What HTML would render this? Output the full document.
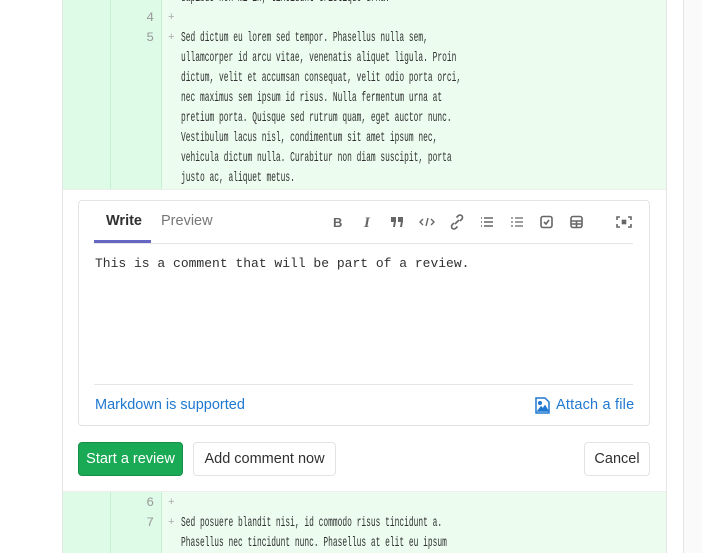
<!DOCTYPE html>
<html><head><meta charset="utf-8"><style>
*{margin:0;padding:0;box-sizing:border-box}
body{width:702px;height:553px;overflow:hidden;background:#fff;font-family:"Liberation Sans",sans-serif;position:relative}
.rbg{position:absolute;left:683px;top:0;width:19px;height:553px;background:#fafafa;border-left:1px solid #e5e5e5}
.frame{position:absolute;left:62px;top:0;width:605px;height:553px;border-left:1px solid #e5e5e5;border-right:1px solid #e5e5e5}
.diff{position:absolute;left:62px;width:605px;background:#ecfdf0;border-left:1px solid #e5e5e5;border-right:1px solid #e5e5e5}
.c1{position:absolute;left:0;top:0;bottom:0;width:48px;background:#ddfbe6;border-right:1px solid #c7f0d2}
.c2{position:absolute;left:48px;top:0;bottom:0;width:51px;background:#ddfbe6;border-right:1px solid #c7f0d2}
.ln{position:absolute;left:48px;width:43px;text-align:right;font:13px "Liberation Mono",monospace;color:#999;line-height:20px}
.pl{position:absolute;left:105px;font:11px "Liberation Mono",monospace;color:#aaa;line-height:20px}
.code{position:absolute;left:118px;font:14px "Liberation Mono",monospace;color:#303030;line-height:20px;transform:scaleX(0.565);transform-origin:0 0;white-space:pre}
.box{position:absolute;left:78px;top:200px;width:572px;height:226px;border:1px solid #e3e3e3;border-radius:4px;background:#fff}
.tab{position:absolute;top:213px;font-size:14.5px}
.bar{position:absolute;left:94px;top:240px;width:57px;height:3px;background:#6666c4}
.sep{position:absolute;left:94px;width:539px;height:1px;background:#e5e5e5}
.ta{position:absolute;left:95px;top:256px;font:13px "Liberation Mono",monospace;color:#303030}
.lnk{position:absolute;top:397px;font-size:14.5px;color:#1f78d1}
.btn{position:absolute;top:442px;height:34px;border:1px solid #e3e3e3;border-radius:4px;background:#fff;font-size:14.5px;color:#303030;line-height:32px;text-align:center}
.ic{position:absolute;top:214px}
</style></head><body>
<div class="rbg"></div>
<div class="frame"></div>
<div class="diff" style="top:0;height:190px">
 <div class="c1"></div><div class="c2"></div>
 <div class="code" style="top:-12px">dapibus non mi in, tincidunt tristique urna.</div>
 <div class="ln" style="top:8px">4</div><div class="pl" style="top:8px">+</div>
 <div class="ln" style="top:28px">5</div><div class="pl" style="top:28px">+</div>
 <div class="code" style="top:28px">Sed dictum eu lorem sed tempor. Phasellus nulla sem,
ullamcorper id arcu vitae, venenatis aliquet ligula. Proin
dictum, velit et accumsan consequat, velit odio porta orci,
nec maximus sem ipsum id risus. Nulla fermentum urna at
pretium porta. Quisque sed rutrum quam, eget auctor nunc.
Vestibulum lacus nisl, condimentum sit amet ipsum nec,
vehicula dictum nulla. Curabitur non diam suscipit, porta
justo ac, aliquet metus.</div>
</div>
<div style="position:absolute;left:63px;top:189px;width:603px;height:1px;background:#eee"></div>
<div class="box"></div>
<div class="tab" style="left:106px;color:#303030;font-weight:bold">Write</div>
<div class="tab" style="left:161px;color:#777">Preview</div>
<div class="bar"></div>
<div class="sep" style="top:243px"></div>
<svg class="ic" style="left:326px" width="310" height="16" viewBox="0 0 310 16" fill="none" stroke="#666" stroke-width="1.6">
 <text x="7" y="13" font-family="Liberation Sans" font-weight="bold" font-size="13" fill="#666" stroke="none">B</text>
 <text x="38" y="13" font-family="Liberation Serif" font-style="italic" font-weight="bold" font-size="15" fill="#666" stroke="none">I</text>
 <g fill="#666" stroke="none"><rect x="65" y="3" width="5" height="5"/><path d="M68 7h2l-1 6h-2z"/><rect x="72" y="3" width="5" height="5"/><path d="M75 7h2l-1 6h-2z"/></g>
 <path d="M97 5l-3 3 3 3M105 5l3 3-3 3M102 4l-2 8" stroke-width="1.4"/>
 <path d="M128 9l-2 2a2.5 2.5 0 0 0 3.5 3.5l2-2M134 7l2-2a2.5 2.5 0 0 0-3.5-3.5l-2 2M129 10l4-4"/>
 <path d="M158 4h9M158 8h9M158 12h9M155 4h1M155 8h1M155 12h1"/>
 <path d="M189 4h8M189 8h8M189 12h8M186 3v2M186 7v2M186 11v2" stroke-width="1.2"/>
 <rect x="215" y="2.5" width="11" height="11" rx="2"/><path d="M218 8l2 2 3-4"/>
 <rect x="245" y="2.5" width="11" height="11" rx="2"/><path d="M245 7h11M245 10h11M250.5 7v6"/>
 <path d="M294 3h-3v3M302 3h3v3M294 13h-3v-3M302 13h3v-3"/><rect x="296.5" y="6.5" width="3" height="3" fill="#666"/>
</svg>
<div class="ta">This is a comment that will be part of a review.</div>
<div class="sep" style="top:384px"></div>
<div class="lnk" style="left:95px">Markdown is supported</div>
<svg style="position:absolute;left:535px;top:397px" width="15" height="17" viewBox="0 0 15 17" fill="none" stroke="#1f78d1" stroke-width="1.5"><path d="M1 1h9l4 4v11H1z"/><path d="M3 14l3-4 2 2 2-3 3 5z" fill="#1f78d1"/><circle cx="5" cy="6" r="1.3" fill="#1f78d1"/></svg>
<div class="lnk" style="left:556px;letter-spacing:0.2px">Attach a file</div>
<div class="btn" style="left:78px;width:105px;background:#1aaa55;border-color:#168f48;color:#fff">Start a review</div>
<div class="btn" style="left:193px;width:143px">Add comment now</div>
<div class="btn" style="left:584px;width:66px">Cancel</div>
<div style="position:absolute;left:63px;top:491px;width:603px;height:1px;background:#eee"></div>
<div class="diff" style="top:492px;height:61px">
 <div class="c1"></div><div class="c2"></div>
 <div class="ln" style="top:1px">6</div><div class="pl" style="top:1px">+</div>
 <div class="ln" style="top:21px">7</div><div class="pl" style="top:21px">+</div>
 <div class="code" style="top:21px">Sed posuere blandit nisi, id commodo risus tincidunt a.
Phasellus nec tincidunt nunc. Phasellus at elit eu ipsum</div>
</div>
</body></html>
